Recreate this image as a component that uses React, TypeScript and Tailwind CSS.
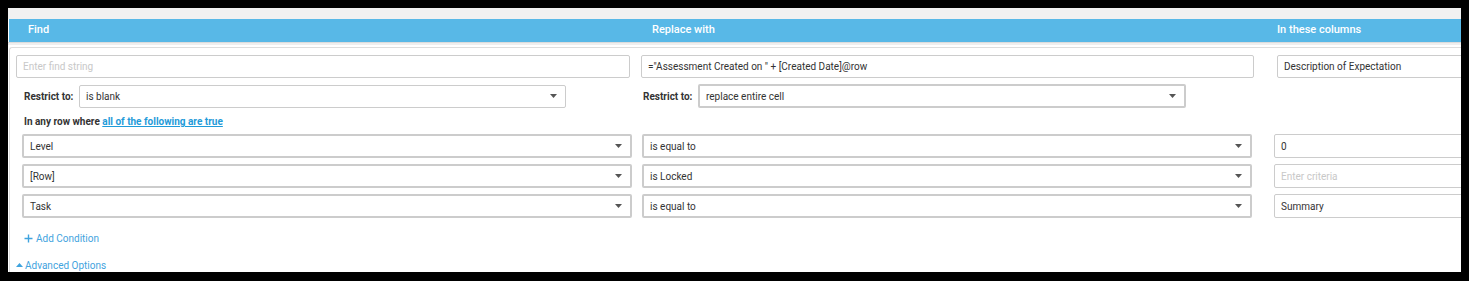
import React from "react";

const font = { fontFamily: "Roboto, 'Liberation Sans', sans-serif" };

function Arrow() {
  return (
    <svg width="7" height="4" viewBox="0 0 7 4" className="shrink-0">
      <polygon points="0,0 7,0 3.5,4" fill="#555" />
    </svg>
  );
}

function Select({ value, thick, w }: { value: string; thick?: boolean; w: string }) {
  return (
    <div
      className={
        "flex items-center justify-between rounded-[2px] bg-white pl-[6px] pr-[8px] text-[10px] text-[#333] " +
        w +
        (thick ? " h-[24px] border-2 border-[#cccccc]" : " h-[23px] border border-[#cccccc]")
      }
    >
      <span>{value}</span>
      <Arrow />
    </div>
  );
}

function Input({ value, placeholder, w, h }: { value?: string; placeholder?: string; w: string; h?: string }) {
  return (
    <div
      className={
        "flex shrink-0 items-center rounded-[2px] border border-[#cccccc] bg-white pl-[6px] text-[10px] " +
        w +
        " " +
        (h ?? "h-[23px]")
      }
    >
      {value ? <span className="text-[#333]">{value}</span> : <span className="text-[#c8c8c8]">{placeholder}</span>}
    </div>
  );
}

function Condition({ field, op, crit, placeholder }: { field: string; op: string; crit?: string; placeholder?: string }) {
  return (
    <div className="flex items-center">
      <div className="ml-[12px] shrink-0">
        <Select value={field} thick w="w-[610px]" />
      </div>
      <div className="ml-[10px] shrink-0">
        <Select value={op} thick w="w-[610px]" />
      </div>
      <div className="ml-[22px] shrink-0">
        <Input value={crit} placeholder={placeholder} w="w-[220px]" h="h-[24px]" />
      </div>
    </div>
  );
}

export default function App() {
  return (
    <div className="h-[281px] w-[1469px] overflow-hidden bg-black pl-[8px] pt-[8px]" style={font}>
      <div className="h-[264px] w-[1453px] overflow-hidden bg-white">
        <div className="h-[11px] bg-[#f1f1f1]" />
        <div className="ml-[1px] flex h-[23px] items-center bg-[#58b8e7] text-[11px] font-medium text-white">
          <div className="w-[643px] shrink-0 pl-[19px]">Find</div>
          <div className="w-[625px] shrink-0">Replace with</div>
          <div className="shrink-0">In these columns</div>
        </div>
        <div className="h-[1px] bg-[#dcdcdc]" />
        <div className="h-[2px] bg-[#efefef]" />
        <div className="h-[2px]" />
        <div className="ml-[1px] h-[300px] rounded-tl-[3px] border-l border-t border-[#dddddd] pt-[7px]">
          <div className="flex items-center">
            <div className="ml-[6px]">
              <Input placeholder="Enter find string" w="w-[614px]" />
            </div>
            <div className="ml-[11px]">
              <Input value={'="Assessment Created on " + [Created Date]@row'} w="w-[613px]" />
            </div>
            <div className="ml-[23px]">
              <Input value="Description of Expectation" w="w-[220px]" />
            </div>
          </div>

          <div className="mt-[6px] flex h-[24px] items-center">
            <div className="ml-[14px] w-[55px] shrink-0 text-[10px] font-bold text-[#333]">Restrict to:</div>
            <div className="shrink-0">
              <Select value="is blank" w="w-[487px]" />
            </div>
            <div className="ml-[77px] w-[55px] shrink-0 text-[10px] font-bold text-[#333]">Restrict to:</div>
            <div className="shrink-0">
              <Select value="replace entire cell" thick w="w-[488px]" />
            </div>
          </div>

          <div className="ml-[14px] mt-[7px] h-[14px] text-[10px] font-bold leading-[14px] text-[#333]">
            In any row where{" "}
            <span className="text-[#1f9bd9] underline">all of the following are true</span>
          </div>

          <div className="mt-[5px] flex flex-col gap-[6px]">
            <Condition field="Level" op="is equal to" crit="0" />
            <Condition field="[Row]" op="is Locked" placeholder="Enter criteria" />
            <Condition field="Task" op="is equal to" crit="Summary" />
          </div>

          <div className="ml-[14px] mt-[13px] flex h-[14px] items-center gap-[3px] text-[10px] text-[#3fa3de]">
            <svg width="9" height="9" viewBox="0 0 9 9">
              <path d="M4.5 0.5V8.5M0.5 4.5H8.5" stroke="#3fa3de" strokeWidth="1.4" />
            </svg>
            <span>Add Condition</span>
          </div>

          <div className="ml-[6px] mt-[13px] flex h-[14px] items-center gap-[2px] text-[10px] text-[#3fa3de]">
            <svg width="7" height="4" viewBox="0 0 7 4">
              <polygon points="0,4 7,4 3.5,0" fill="#3fa3de" />
            </svg>
            <span>Advanced Options</span>
          </div>
        </div>
      </div>
    </div>
  );
}
